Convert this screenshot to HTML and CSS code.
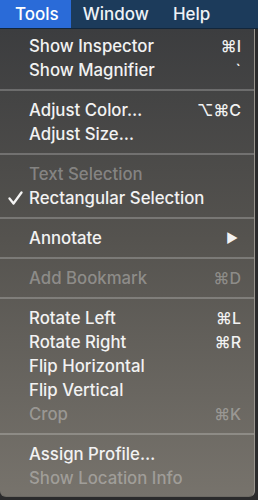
FILE: index.html
```html
<!DOCTYPE html>
<html lang="en">
<head>
  <meta charset="UTF-8" />
  <title>Tools menu</title>
  <link rel="stylesheet" href="styles.css">
</head>
<body>

  <!-- Menu bar -->
  <div class="menubar">
    <span class="title active">Tools</span>
    <span class="title">Window</span>
    <span class="title">Help</span>
  </div>

  <!-- Dropdown -->
  <div class="menu">
    <div class="item"><span>Show Inspector</span><span class="key">⌘I</span></div>
    <div class="item"><span>Show Magnifier</span><span class="key">`</span></div>
    <div class="sep"></div>
    <div class="item"><span>Adjust Color…</span><span class="key">⌥⌘C</span></div>
    <div class="item"><span>Adjust Size…</span></div>
    <div class="sep"></div>
    <div class="item off"><span>Text Selection</span></div>
    <div class="item">
      <svg class="check" width="15" height="14" viewBox="0 0 15 14">
        <path d="M1.5 7.5 L5.5 12.5 L13.5 1.5" fill="none" stroke="#f4f4f4" stroke-width="2.3" stroke-linecap="round" stroke-linejoin="round"/>
      </svg>
      <span>Rectangular Selection</span>
    </div>
    <div class="sep"></div>
    <div class="item"><span>Annotate</span><span class="key arrow">▶</span></div>
    <div class="sep"></div>
    <div class="item off"><span>Add Bookmark</span><span class="key">⌘D</span></div>
    <div class="sep"></div>
    <div class="item"><span>Rotate Left</span><span class="key">⌘L</span></div>
    <div class="item"><span>Rotate Right</span><span class="key">⌘R</span></div>
    <div class="item"><span>Flip Horizontal</span></div>
    <div class="item"><span>Flip Vertical</span></div>
    <div class="item off"><span>Crop</span><span class="key">⌘K</span></div>
    <div class="sep"></div>
    <div class="item"><span>Assign Profile…</span></div>
    <div class="item off"><span>Show Location Info</span></div>
  </div>

</body>
</html>
```

FILE: styles.css
```css
* {
  box-sizing: border-box;
}

body {
  margin: 0;
  width: 258px;
  height: 500px;
  overflow: hidden;
  background-color: #2b2b2c;
  font-family: Inter, 'Open Sans', sans-serif;
  color: #f2f2f2;
}

/* Menu bar */
.menubar {
  height: 29px;
  display: flex;
  background-color: #1c3b5b;
  border-bottom: 1px solid #12263b;
}

.title {
  display: flex;
  align-items: center;
  padding: 0 12px;
  font-size: 17px;
  font-weight: 500;
  color: #eef2f6;
}

.title.active {
  padding-left: 15px;
  background-color: #2a6bd8;
  color: white;
}

/* Dropdown */
.menu {
  width: 255px;
  height: 468px;
  padding: 5px 0 6px;
  background: linear-gradient(#3c3d3f 0%, #55534f 45%, #77736c 100%);
  border-right: 1px solid #9a968f;
  border-bottom: 1px solid #6d6a64;
  border-radius: 0 0 6px 6px;
}

.item {
  position: relative;
  height: 24px;
  display: flex;
  align-items: center;
  justify-content: space-between;
  padding: 0 13px 0 29px;
  font-size: 16.8px;
  font-weight: 500;
}

.item.off {
  color: rgba(255, 255, 255, 0.32);
}

.key {
  font-size: 16px;
}

.arrow {
  font-size: 13px;
  padding-right: 3px;
}

.check {
  position: absolute;
  left: 8px;
  top: 5px;
}

.sep {
  height: 16px;
  display: flex;
  align-items: center;
}

.sep::after {
  content: "";
  display: block;
  width: 100%;
  height: 2px;
  background-color: rgba(255, 255, 255, 0.22);
}
```
